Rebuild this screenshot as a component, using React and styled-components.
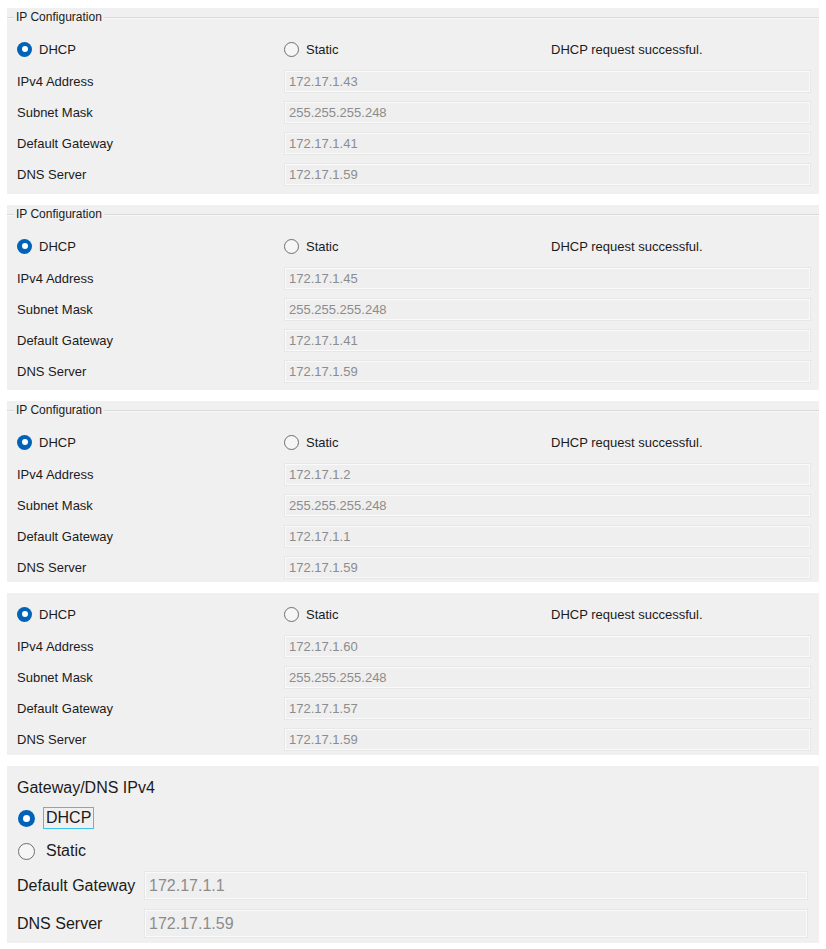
import React from "react";
import styled, { createGlobalStyle, css } from "styled-components";

const GlobalStyle = createGlobalStyle`
  html, body { margin: 0; padding: 0; background: #ffffff; }
  body { font-family: "Liberation Sans", Arial, sans-serif; color: #1b1b1b; }
`;

const Page = styled.div`
  width: 812px;
  padding: 8px 7px;
  display: flex;
  flex-direction: column;
  gap: 11px;
`;

const Panel = styled.section`
  background: #f0f0f0;
  padding-top: ${(p) => (p.$titled ? "0" : "11px")};
  padding-bottom: ${(p) => p.$padBottom}px;
`;

const LegendRow = styled.div`
  display: flex;
  align-items: center;
  height: 18px;
  font-size: 12px;
  color: #1b1b1b;
  &::before,
  &::after {
    content: "";
    height: 1px;
    background: #d9d9d9;
    box-shadow: 0 1px 0 #f8f8f8;
  }
  &::before { width: 7px; }
  &::after { flex: 1; }
`;

const LegendText = styled.span`
  padding: 0 2px;
  line-height: 18px;
`;

const Body = styled.div`
  padding: 0 9px 0 10px;
`;

const RadioRow = styled.div`
  display: grid;
  grid-template-columns: 267px 267px 1fr;
  align-items: center;
  height: 20px;
  margin-top: ${(p) => (p.$titled ? "13px" : "0")};
  font-size: 13px;
`;

const RadioOption = styled.label`
  display: inline-flex;
  align-items: center;
  gap: ${(p) => (p.$large ? "11px" : "7px")};
  font-size: ${(p) => (p.$large ? "16px" : "13px")};
  color: #1b1b1b;
`;

const RadioCircle = styled.span`
  box-sizing: border-box;
  width: ${(p) => p.$size}px;
  height: ${(p) => p.$size}px;
  border-radius: 50%;
  flex: none;
  display: inline-flex;
  align-items: center;
  justify-content: center;
  ${(p) =>
    p.$checked
      ? css`
          background: #0063b8;
          &::after {
            content: "";
            width: ${Math.round(p.$size * 0.4)}px;
            height: ${Math.round(p.$size * 0.4)}px;
            border-radius: 50%;
            background: #ffffff;
          }
        `
      : css`
          background: #f6f6f6;
          border: 1px solid #6e6e6e;
        `}
`;

const FocusText = styled.span`
  padding: 0 2px;
  line-height: 20px;
  border: 1px solid #3fc1ee;
  margin-left: -3px;
`;

const Status = styled.span`
  font-size: 13px;
  color: #1b1b1b;
`;

const FieldGrid = styled.div`
  display: grid;
  grid-template-columns: ${(p) => (p.$large ? "128px" : "268px")} 1fr;
  row-gap: ${(p) => (p.$large ? "11px" : "10px")};
  margin-top: ${(p) => (p.$large ? "9px" : "12px")};
  align-items: center;
`;

const FieldLabel = styled.span`
  font-size: ${(p) => (p.$large ? "16px" : "13px")};
  color: #1b1b1b;
  white-space: nowrap;
`;

const FieldBox = styled.div`
  box-sizing: border-box;
  height: ${(p) => (p.$large ? "27px" : "21px")};
  padding-left: 3px;
  display: flex;
  align-items: center;
  background: #efefef;
  border: 1px solid #fafafa;
  box-shadow: 0 0 0 1px #e7e7e7;
  font-size: ${(p) => (p.$large ? "16px" : "13px")};
  color: #8c8c8c;
`;

const LargePanel = styled.section`
  background: #f0f0f0;
  padding: 12px 12px 6px 10px;
`;

const LargeTitle = styled.div`
  font-size: 16px;
  line-height: 20px;
  color: #1b1b1b;
`;

const RadioStack = styled.div`
  display: flex;
  flex-direction: column;
  gap: 9px;
  margin-top: 8px;
  padding-left: 1px;
`;

const StackRow = styled.div`
  height: 24px;
  display: flex;
  align-items: center;
`;

const configs = [
  { title: true, padBottom: 9, ip: "172.17.1.43", mask: "255.255.255.248", gw: "172.17.1.41", dns: "172.17.1.59" },
  { title: true, padBottom: 8, ip: "172.17.1.45", mask: "255.255.255.248", gw: "172.17.1.41", dns: "172.17.1.59" },
  { title: true, padBottom: 4, ip: "172.17.1.2", mask: "255.255.255.248", gw: "172.17.1.1", dns: "172.17.1.59" },
  { title: false, padBottom: 5, ip: "172.17.1.60", mask: "255.255.255.248", gw: "172.17.1.57", dns: "172.17.1.59" },
];

function IpPanel({ cfg }) {
  const fields = [
    ["IPv4 Address", cfg.ip],
    ["Subnet Mask", cfg.mask],
    ["Default Gateway", cfg.gw],
    ["DNS Server", cfg.dns],
  ];
  return (
    <Panel $titled={cfg.title} $padBottom={cfg.padBottom}>
      {cfg.title && (
        <LegendRow>
          <LegendText>IP Configuration</LegendText>
        </LegendRow>
      )}
      <Body>
        <RadioRow $titled={cfg.title}>
          <RadioOption>
            <RadioCircle $checked $size={15} />
            DHCP
          </RadioOption>
          <RadioOption>
            <RadioCircle $size={15} />
            Static
          </RadioOption>
          <Status>DHCP request successful.</Status>
        </RadioRow>
        <FieldGrid>
          {fields.map(([label, value]) => (
            <React.Fragment key={label}>
              <FieldLabel>{label}</FieldLabel>
              <FieldBox>{value}</FieldBox>
            </React.Fragment>
          ))}
        </FieldGrid>
      </Body>
    </Panel>
  );
}

export default function App() {
  return (
    <>
      <GlobalStyle />
      <Page>
        {configs.map((cfg, i) => (
          <IpPanel key={i} cfg={cfg} />
        ))}
        <LargePanel>
          <LargeTitle>Gateway/DNS IPv4</LargeTitle>
          <RadioStack>
            <StackRow>
              <RadioOption $large>
                <RadioCircle $checked $size={17} />
                <FocusText>DHCP</FocusText>
              </RadioOption>
            </StackRow>
            <StackRow>
              <RadioOption $large>
                <RadioCircle $size={17} />
                Static
              </RadioOption>
            </StackRow>
          </RadioStack>
          <FieldGrid $large>
            <FieldLabel $large>Default Gateway</FieldLabel>
            <FieldBox $large>172.17.1.1</FieldBox>
            <FieldLabel $large>DNS Server</FieldLabel>
            <FieldBox $large>172.17.1.59</FieldBox>
          </FieldGrid>
        </LargePanel>
      </Page>
    </>
  );
}
